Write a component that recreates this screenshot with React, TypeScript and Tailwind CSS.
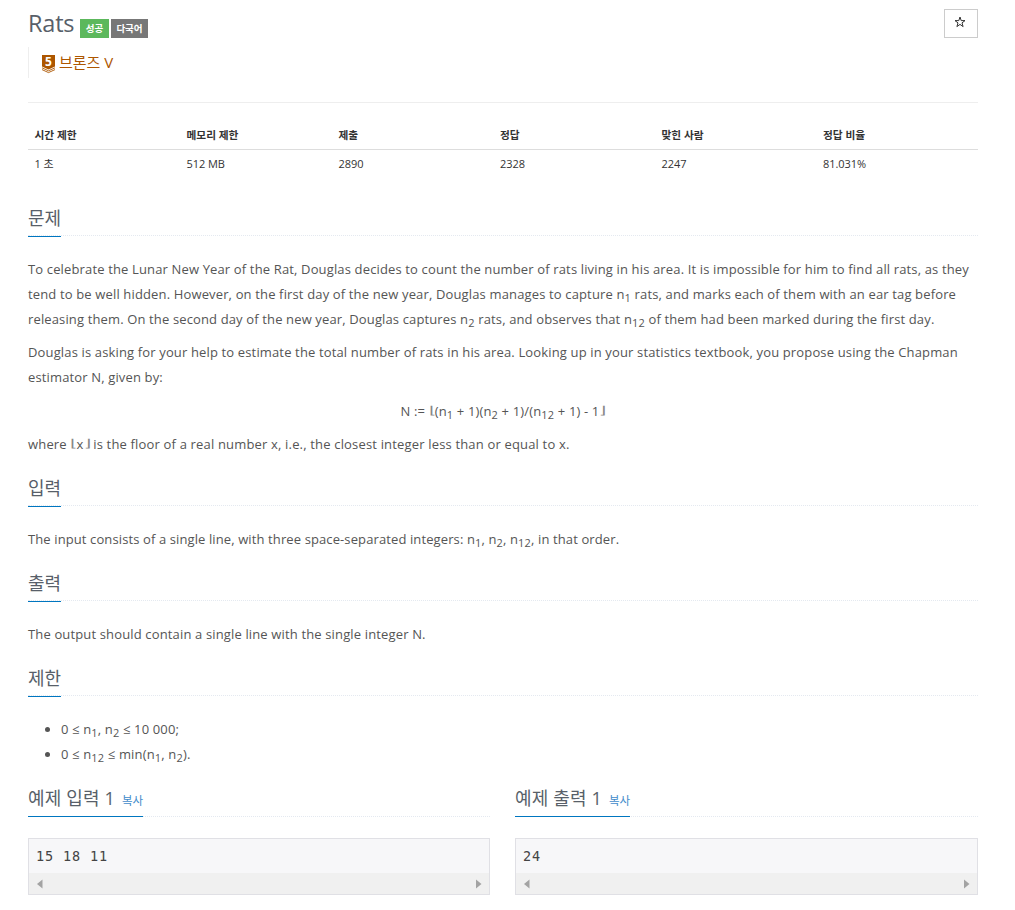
import React from 'react';

const info = [
  { label: '시간 제한', value: '1 초', width: 'w-[152px]' },
  { label: '메모리 제한', value: '512 MB', width: 'w-[152px]' },
  { label: '제출', value: '2890', width: 'w-[161.5px]' },
  { label: '정답', value: '2328', width: 'w-[161.5px]' },
  { label: '맞힌 사람', value: '2247', width: 'w-[161.5px]' },
  { label: '정답 비율', value: '81.031%', width: 'w-[161.5px]' },
];

function Sub({ children }: { children: React.ReactNode }) {
  return <sub className="relative bottom-[-3px] align-baseline text-[11px] leading-none tracking-[0.2px]">{children}</sub>;
}

// Floor brackets are smaller and wider than the surrounding text
function Floor({ children }: { children: React.ReactNode }) {
  return <span className="relative -top-[2px] mx-[1px] inline-block scale-x-[1.7] text-[11px] leading-none font-light text-[#888]">{children}</span>;
}

function Section({ title, children }: { title: string; children: React.ReactNode }) {
  return (
    <section>
      <div className="mt-3 mb-[21px] flex h-[37px] border-b border-dotted border-[#e4e9f0]">
        <h2 className="h-[38px] shrink-0 border-b border-[#0076c0] pt-[6px] text-[18px] leading-[27px] text-[#585f69]">
          {title}
        </h2>
      </div>
      <div className="text-[13px] leading-[25px] tracking-[0.145px] whitespace-nowrap">{children}</div>
    </section>
  );
}

function Arrow({ right }: { right?: boolean }) {
  return (
    <svg width="6" height="10" viewBox="0 0 6 10" fill="#a3a3a3">
      <path d={right ? 'M0 0.5 5.5 5 0 9.5z' : 'M5.5 0.5 0 5 5.5 9.5z'} />
    </svg>
  );
}

function Sample({ title, data }: { title: string; data: string }) {
  return (
    <div>
      <div className="mb-[21px] flex h-[38px] border-b border-dotted border-[#e4e9f0]">
        <h2 className="flex h-[38px] shrink-0 items-baseline border-b border-[#0076c0] pt-[6px] text-[18px] leading-[27px] text-[#585f69]">
          <span className="tracking-[0.15px]">{title}</span>
          <span className="ml-[7px] text-[11.5px] text-[#428bca]">복사</span>
        </h2>
      </div>
      <div className="h-[57px] border border-[#e0e0e5] bg-[#f7f7f9]">
        <pre className="h-[34px] px-[7px] pt-[5px] font-['DejaVu_Sans_Mono','Noto_Sans_CJK_KR',monospace] text-[13.5px] leading-[25px] tracking-[0.87px] text-[#444]">
          {data}
        </pre>
        <div className="flex h-[21px] items-center justify-between bg-[#f0f0f0] pr-[7px] pl-2">
          <Arrow />
          <Arrow right />
        </div>
      </div>
    </div>
  );
}

function App() {
  return (
    <div className="h-[910px] overflow-hidden bg-white pr-[37px] pl-7 font-['Open_Sans','Noto_Sans_CJK_KR',sans-serif] text-[#555]">
      <header className="flex h-[46px] items-start justify-between">
        <div className="flex">
          <h1 className="mt-[6px] w-[52px] text-[23.5px] leading-[34px] tracking-[-0.2px] text-[#585f69]">Rats</h1>
          <span className="mt-[19px] flex h-[19px] w-[29px] items-center justify-center bg-[#5cb85c] pt-[2px] text-[9.5px] font-bold text-white">
            성공
          </span>
          <span className="mt-[19px] ml-[2px] flex h-[19px] w-[37px] items-center justify-center bg-[#777] pt-[2px] text-[9.5px] font-bold text-white">
            다국어
          </span>
        </div>
        <button className="mt-[9px] flex h-[29px] w-[34px] items-center justify-center border border-[#ccc] bg-white pr-[2px] pb-[3px]">
          <svg width="12" height="12" viewBox="0 0 12 12" fill="none" stroke="#333" strokeWidth="1">
            <path d="M6 1 7.2 4.6H11L8 6.9 9.1 10.6 6 8.4 2.9 10.6 4 6.9 1 4.6H4.8z" />
          </svg>
        </button>
      </header>

      <div className="mt-[1px] flex h-[31px] items-center border-l border-[#eee] pl-3 text-[#ad5600]">
        <svg width="15" height="20" viewBox="0 0 15 20" className="mt-[3px]">
          <path d="M1 1H14V12.5L7.5 15.5 1 12.5z" fill="#ad5600" />
          <path d="M1 13.8 7.5 16.8 14 13.8M1 15.6 7.5 18.6 14 15.6" fill="none" stroke="#ad5600" strokeWidth="0.9" />
          <text x="7.5" y="12" textAnchor="middle" fontSize="12" fontWeight="700" fill="#fff">5</text>
        </svg>
        <span className="mb-px ml-[3px] text-[15px] leading-[20px]">브론즈 V</span>
      </div>

      <hr className="mt-6 border-[#eee]" />

      <table className="mt-4 w-full table-fixed text-left text-[11px] text-[#333]">
        <thead>
          <tr className="h-[30px] border-b border-[#ddd]">
            {info.map((item) => (
              <th key={item.label} className={`${item.width} h-[29px] px-[6.5px] pt-[4px] pb-0 text-[10.7px] leading-[15px] font-bold`}>{item.label}</th>
            ))}
          </tr>
        </thead>
        <tbody>
          <tr className="h-[29px]">
            {info.map((item) => (
              <td key={item.label} className="px-[6.5px] py-0 tracking-[-0.05px]">{item.value}</td>
            ))}
          </tr>
        </tbody>
      </table>

      <div className="h-[9px]" />

      <Section title="문제">
        <p className="mb-2">
          To celebrate the Lunar New Year of the Rat, Douglas decides to count the number of rats living in his area. It is impossible for him to find all rats, as they<br />
          tend to be well hidden. However, on the first day of the new year, Douglas manages to capture n<Sub>1</Sub> rats, and marks each of them with an ear tag before<br />
          <span className="tracking-[0.135px]">releasing them. On the second day of the new year, Douglas captures n<Sub>2</Sub> rats, and observes that n<Sub>12</Sub> of them had been marked during the first day.</span>
        </p>
        <p className="mb-[9px]">
          Douglas is asking for your help to estimate the total number of rats in his area. Looking up in your statistics textbook, you propose using the Chapman<br />
          estimator N, given by:
        </p>
        <p className="mb-2 text-center">
          N := <Floor>⌊</Floor>(n<Sub>1</Sub> + 1)(n<Sub>2</Sub> + 1)/(n<Sub>12</Sub> + 1) - 1<Floor>⌋</Floor>
        </p>
        <p className="tracking-[0.17px]">
          where <Floor>⌊</Floor>x<Floor>⌋</Floor> is the floor of a real number x, i.e., the closest integer less than or equal to x.
        </p>
      </Section>

      <Section title="입력">
        <p className="tracking-[0.11px]">
          The input consists of a single line, with three space-separated integers: n<Sub>1</Sub>, n<Sub>2</Sub>, n<Sub>12</Sub>, in that order.
        </p>
      </Section>

      <Section title="출력">
        <p>The output should contain a single line with the single integer N.</p>
      </Section>

      <Section title="제한">
        <ul className="list-disc pl-[33px]">
          <li>0 ≤ n<Sub>1</Sub>, n<Sub>2</Sub> ≤ 10 000;</li>
          <li>0 ≤ n<Sub>12</Sub> ≤ min(n<Sub>1</Sub>, n<Sub>2</Sub>).</li>
        </ul>
      </Section>

      <div className="mt-3 grid grid-cols-[462px_463px] gap-[25px]">
        <Sample title="예제 입력 1" data="15 18 11" />
        <Sample title="예제 출력 1" data="24" />
      </div>
    </div>
  );
}

export default App;
